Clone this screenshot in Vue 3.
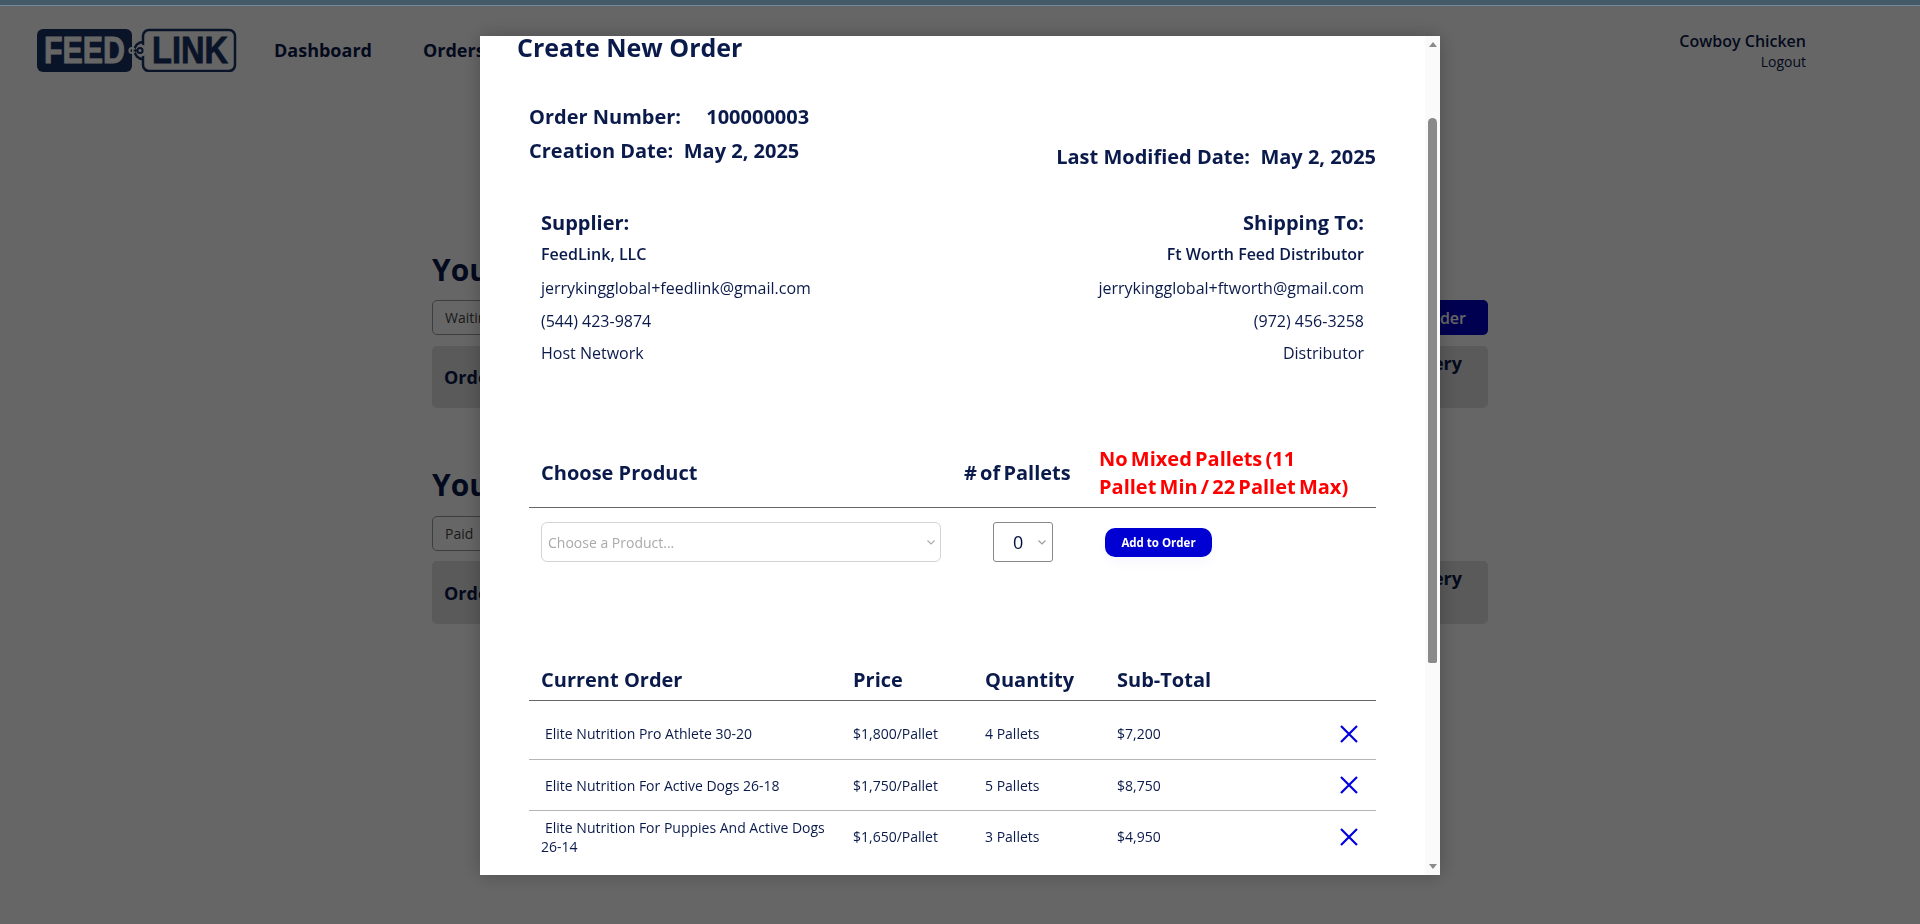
<template>
  <div class="page">
    <div class="top-strip"></div>
    <header class="header">
      <svg class="logo" viewBox="0 0 200 44" width="200" height="44">
        <rect x="0" y="1" width="95" height="43" rx="6" fill="#1b3466" />
        <text x="7" y="35" class="logo-text" fill="#fff" stroke="#fff" stroke-width="0.800" textLength="81" lengthAdjust="spacingAndGlyphs">FEED</text>
        <rect x="106" y="2" width="92" height="41" rx="6" fill="none" stroke="#1b3466" stroke-width="2.500" />
        <circle cx="104" cy="22.500" r="6" fill="#fff" />
        <path d="M106 14a8.500 8.500 0 0 0 0 17" fill="none" stroke="#1b3466" stroke-width="2.500" />
        <text x="115" y="35" class="logo-text" fill="#1b3466" stroke="#1b3466" stroke-width="0.800" textLength="76" lengthAdjust="spacingAndGlyphs">LINK</text>
        <circle cx="95" cy="22.500" r="2.600" fill="none" stroke="#fff" stroke-width="2" />
        <circle cx="103" cy="22.500" r="2.600" fill="none" stroke="#1b3466" stroke-width="2" />
        <path d="M97 22.500h4" stroke="#1b3466" stroke-width="2" />
      </svg>
      <nav class="nav">
        <a>Dashboard</a>
        <a>Orders</a>
      </nav>
      <div class="account">
        <div class="account-name">Cowboy Chicken</div>
        <div class="logout">Logout</div>
      </div>
    </header>

    <main class="content">
      <section class="section first">
        <h2>Your Open Orders</h2>
        <div class="controls">
          <div class="filter">Waiting on Approval</div>
          <button class="create">Create New Order</button>
        </div>
        <div class="list-head">
          <span class="order-label">Order Number</span>
          <span class="last">Delivery<br />Date</span>
        </div>
      </section>
      <section class="section second">
        <h2>Your Order History</h2>
        <div class="controls">
          <div class="filter">Paid</div>
        </div>
        <div class="list-head">
          <span class="order-label">Order Number</span>
          <span class="last">Delivery<br />Date</span>
        </div>
      </section>
    </main>

    <div class="overlay">
      <div class="dialog">
        <div ref="scroller" class="dialog-scroll">
          <div class="dialog-body">
            <h3 class="dialog-title">Create New Order</h3>

            <div class="meta">
              <div>
                <div class="meta-line">Order Number: <span class="order-no">100000003</span></div>
                <div class="meta-line second-line">Creation Date:&nbsp; May 2, 2025</div>
              </div>
              <div class="meta-line modified">Last Modified Date:&nbsp; May 2, 2025</div>
            </div>

            <div class="parties">
              <div v-for="p in parties" :key="p.title" class="party" :class="p.side">
                <div class="party-title">{{ p.title }}</div>
                <div class="party-name">{{ p.name }}</div>
                <div class="party-line email">{{ p.email }}</div>
                <div class="party-line">{{ p.phone }}</div>
                <div class="party-line kind">{{ p.kind }}</div>
              </div>
            </div>

            <div class="choose-head">
              <div class="choose-title">Choose Product</div>
              <div class="pallets-title"># of Pallets</div>
              <div class="warning">No Mixed Pallets (11 Pallet Min / 22 Pallet Max)</div>
            </div>
            <div class="choose-row">
              <div class="product-select">
                <span>Choose a Product...</span>
                <svg width="8" height="5" viewBox="0 0 8 5"><path d="M.5.5L4 4 7.500.5" fill="none" stroke="#aaa" stroke-width="1.100" /></svg>
              </div>
              <div class="qty-select">
                <span>0</span>
                <svg width="8" height="5" viewBox="0 0 8 5"><path d="M.5.5L4 4 7.500.5" fill="none" stroke="#999" stroke-width="1.100" /></svg>
              </div>
              <button class="add">Add to Order</button>
            </div>

            <div class="order-head order-grid">
              <div>Current Order</div>
              <div>Price</div>
              <div>Quantity</div>
              <div>Sub-Total</div>
            </div>
            <div v-for="row in rows" :key="row.name" class="order-row order-grid">
              <div class="row-name">{{ row.name }}</div>
              <div>{{ row.price }}</div>
              <div>{{ row.qty }}</div>
              <div>{{ row.sub }}</div>
              <svg class="remove" width="18" height="18" viewBox="0 0 18 18">
                <path d="M1 1l16 16M17 1L1 17" stroke="#0000e0" stroke-width="2.200" fill="none" />
              </svg>
            </div>

            <div class="totals">
              <div>Total: $20,900</div>
              <button class="add">Submit Order</button>
            </div>
          </div>
        </div>
        <div class="scrollbar">
          <span class="arrow up"></span>
          <span class="thumb"></span>
          <span class="arrow down"></span>
        </div>
      </div>
    </div>
  </div>
</template>

<script setup>
import { ref, onMounted } from 'vue';

const scroller = ref(null);

const parties = [
  {
    title: 'Supplier:',
    side: 'left',
    name: 'FeedLink, LLC',
    email: 'jerrykingglobal+feedlink@gmail.com',
    phone: '(544) 423-9874',
    kind: 'Host Network'
  },
  {
    title: 'Shipping To:',
    side: 'right',
    name: 'Ft Worth Feed Distributor',
    email: 'jerrykingglobal+ftworth@gmail.com',
    phone: '(972) 456-3258',
    kind: 'Distributor'
  }
];

const rows = [
  { name: 'Elite Nutrition Pro Athlete 30-20', price: '$1,800/Pallet', qty: '4 Pallets', sub: '$7,200' },
  { name: 'Elite Nutrition For Active Dogs 26-18', price: '$1,750/Pallet', qty: '5 Pallets', sub: '$8,750' },
  { name: 'Elite Nutrition For Puppies And Active Dogs 26-14', price: '$1,650/Pallet', qty: '3 Pallets', sub: '$4,950' }
];

onMounted(() => {
  scroller.value.scrollTop = 100;
});
</script>

<style>
html,
body {
  margin: 0;
  background: #fff;
  overflow: hidden;
}
</style>

<style scoped>
.page {
  height: 924px;
  font-family: "Open Sans", sans-serif;
  color: #0a1a4b;
  background: #fff;
}

.top-strip {
  position: relative;
  z-index: 2;
  height: 5px;
  background: #455a68;
  border-bottom: 1px solid #74879a;
}

.header {
  display: flex;
  align-items: flex-start;
  padding: 22px 0 0 37px;
  height: 80px;
}

.logo {
  flex: none;
}

.logo-text {
  font-family: "Liberation Sans", sans-serif;
  font-size: 36px;
  font-weight: 700;
}

.nav {
  display: flex;
  gap: 51px;
  margin-left: 37px;
  margin-top: 10px;
  font-size: 18px;
  font-weight: 700;
  line-height: 24px;
}

.account {
  margin-left: auto;
  margin-right: 114px;
  text-align: right;
}

.account-name {
  font-size: 16px;
  font-weight: 600;
  line-height: 22px;
  margin-top: 2px;
}

.logout {
  font-size: 14px;
  line-height: 20px;
}

.content {
  width: 1056px;
  margin: 0 auto;
}

.section h2 {
  margin: 0;
  font-size: 30px;
  line-height: 40px;
  font-weight: 700;
}

.first {
  padding-top: 142px;
}

.second {
  padding-top: 57px;
}

.controls {
  display: flex;
  justify-content: space-between;
  margin-top: 10px;
  height: 35px;
}

.second .controls {
  margin-top: 11px;
}

.filter {
  width: 220px;
  box-sizing: border-box;
  border: 1px solid #999;
  border-radius: 5px;
  padding: 0 12px;
  line-height: 33px;
  font-size: 14px;
  color: #444;
}

.create {
  padding: 0 22px;
  border: 0;
  border-radius: 5px;
  background: #0000c8;
  color: #fff;
  font-family: inherit;
  font-size: 16px;
  font-weight: 600;
}

.list-head {
  display: flex;
  justify-content: space-between;
  margin-top: 11px;
  height: 62px;
  box-sizing: border-box;
  padding: 0 26px 0 12px;
  background: #e0e0e0;
  border-radius: 5px;
  font-size: 18px;
  font-weight: 700;
  line-height: 22px;
}

.order-label {
  align-self: center;
}

.last {
  margin-top: 6px;
}

.second .list-head {
  height: 63px;
  margin-top: 10px;
}

.overlay {
  position: fixed;
  inset: 0;
  background: rgba(0, 0, 0, 0.6);
}

.dialog {
  position: absolute;
  left: 480px;
  top: 36px;
  width: 960px;
  height: 839px;
  display: flex;
  background: #fff;
  box-shadow: 0 0 18px rgba(0, 0, 0, 0.25);
}

.dialog-scroll {
  flex: 1;
  min-width: 0;
  overflow: hidden;
}

.dialog-body {
  height: 1240px;
  box-sizing: border-box;
  padding: 94px 49px 0 49px;
}

.scrollbar {
  flex: none;
  width: 15px;
  background: #fafafa;
  display: flex;
  flex-direction: column;
  align-items: center;
}

.arrow {
  width: 0;
  height: 0;
  border-left: 4.500px solid transparent;
  border-right: 4.500px solid transparent;
}

.arrow.up {
  margin-top: 6px;
  border-bottom: 5px solid #8a8a8a;
}

.arrow.down {
  margin-top: 201px;
  border-top: 5px solid #8a8a8a;
}

.thumb {
  width: 9px;
  height: 545px;
  margin-top: 71px;
  background: #8a8a8a;
  border-radius: 5px 5px 2px 2px;
}

.dialog-title {
  margin: 0 0 0 -12px;
  font-size: 25px;
  line-height: 35px;
  font-weight: 700;
}

.meta {
  display: flex;
  justify-content: space-between;
  align-items: flex-end;
  margin-top: 38px;
}

.meta-line {
  font-size: 20px;
  font-weight: 700;
  line-height: 27px;
}

.order-no {
  margin-left: 20px;
}

.second-line {
  margin-top: 7px;
}

.modified {
  position: relative;
  top: 6px;
}

.parties {
  display: flex;
  justify-content: space-between;
  padding: 0 12px;
  margin-top: 45px;
}

.party.right {
  text-align: right;
}

.party-title {
  font-size: 20px;
  font-weight: 700;
  line-height: 27px;
}

.party-name {
  font-size: 16px;
  font-weight: 600;
  line-height: 22px;
  margin-top: 7px;
}

.party-line {
  font-size: 16px;
  line-height: 22px;
  margin-top: 11px;
}

.party-line.email {
  margin-top: 12px;
}

.party-line.kind {
  margin-top: 10px;
}

.choose-head {
  display: flex;
  align-items: center;
  height: 56px;
  margin-top: 81px;
  border-bottom: 1px solid #666;
  padding-bottom: 6px;
}

.choose-title {
  width: 423px;
  padding-left: 12px;
  margin-bottom: 2px;
  font-size: 20px;
  font-weight: 700;
}

.pallets-title {
  width: 135px;
  margin-bottom: 2px;
  font-size: 20px;
  font-weight: 700;
  word-spacing: -2px;
}

.warning {
  width: 253px;
  color: #f00;
  font-size: 20px;
  font-weight: 700;
  line-height: 28px;
  word-spacing: -2px;
}

.choose-row {
  display: flex;
  align-items: flex-start;
  padding: 14px 0 0 12px;
  height: 144px;
}

.product-select {
  width: 400px;
  height: 40px;
  box-sizing: border-box;
  border: 1px solid #d4d4d8;
  border-radius: 6px;
  padding: 0 5px 0 6px;
  display: flex;
  align-items: center;
  justify-content: space-between;
  font-size: 14px;
  color: #aaa;
}

.qty-select {
  margin-left: 52px;
  width: 60px;
  height: 40px;
  box-sizing: border-box;
  border: 1px solid #888;
  border-radius: 3px;
  padding: 0 6px 0 19px;
  display: flex;
  align-items: center;
  justify-content: space-between;
  font-size: 18px;
  color: #00103f;
}

.add {
  margin-left: 52px;
  margin-top: 6px;
  width: 107px;
  height: 29px;
  border: 0;
  border-radius: 10px;
  background: #0000d2;
  color: #fff;
  font-family: inherit;
  font-size: 11.500px;
  font-weight: 700;
  box-shadow: 0 6px 12px rgba(0, 0, 210, 0.03);
}

.order-grid {
  display: grid;
  grid-template-columns: 312px 132px 132px 1fr 36px;
  padding-left: 12px;
}

.order-head {
  font-size: 20px;
  font-weight: 700;
  line-height: 27px;
  padding-bottom: 7px;
  border-bottom: 1px solid #666;
}

.order-row {
  min-height: 51px;
  box-sizing: border-box;
  align-items: center;
  font-size: 14px;
  line-height: 19px;
  border-bottom: 1px solid #b5b5b5;
}

.order-head + .order-row {
  min-height: 59px;
  padding-top: 7px;
}

.order-row:nth-last-child(2) {
  border-bottom: 0;
}

.row-name {
  padding-right: 10px;
  text-indent: 4px;
}

.totals {
  display: flex;
  justify-content: space-between;
  align-items: center;
  margin-top: 40px;
  font-size: 20px;
  font-weight: 700;
}
</style>
